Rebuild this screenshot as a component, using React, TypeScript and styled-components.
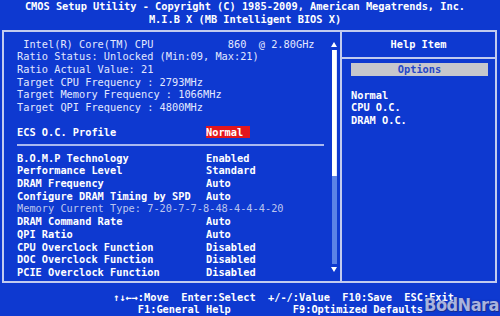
import React from 'react';
import styled, { createGlobalStyle } from 'styled-components';

const GlobalStyle = createGlobalStyle`
  html, body {
    margin: 0;
    padding: 0;
    background: #0f3bd2;
  }
`;

const BLUE = '#0e39d0';
const LINE = '#c2cbef';

const Page = styled.div`
  position: relative;
  width: 500px;
  height: 316px;
  overflow: hidden;
  background: ${BLUE};
  color: #ffffff;
  font-family: "DejaVu Sans Mono", "Liberation Mono", monospace;
  font-size: 10.3px;
  display: flex;
  flex-direction: column;
`;

const Header = styled.header`
  height: 30px;
  padding-right: 10px;
  text-align: center;
  line-height: 12.6px;
  font-weight: bold;
  white-space: pre;
`;

const Frame = styled.div`
  margin: 0 3px 0 2px;
  height: 254px;
  box-sizing: border-box;
  border: 2px solid ${LINE};
  display: grid;
  grid-template-columns: 1fr 155px;
`;

const LeftPanel = styled.section`
  display: flex;
  padding-left: 13px;
  min-width: 0;
`;

const ItemList = styled.div`
  flex: 1;
  padding-top: 5.6px;
`;

const InfoLine = styled.div<{ $dim?: boolean }>`
  height: 12.7px;
  line-height: 12.7px;
  white-space: pre;
  color: ${(p) => (p.$dim ? '#bcc5ee' : '#e2e8ff')};
`;

const Blank = styled.div`
  height: 12.7px;
`;

const SettingRow = styled.div`
  display: grid;
  grid-template-columns: 189px 1fr;
  height: 12.7px;
  line-height: 12.7px;
  font-weight: bold;
  white-space: pre;
`;

const Value = styled.span<{ $selected?: boolean }>`
  display: inline-block;
  line-height: 12px;
  padding-right: ${(p) => (p.$selected ? '7px' : '0')};
  background: ${(p) => (p.$selected ? '#e3161c' : 'transparent')};
`;

const Divider = styled.div`
  height: 0;
  border-top: 2px solid #a9b8f0;
  margin: 5.35px 7px 5.35px 0;
`;

const ScrollBar = styled.div`
  width: 6px;
  margin: 0 3px 0 0;
  padding: 10px 0 9px;
  display: flex;
  flex-direction: column;
  align-items: center;
`;

const Arrow = styled.div<{ $down?: boolean }>`
  width: 0;
  height: 0;
  border-left: 3px solid transparent;
  border-right: 3px solid transparent;
  ${(p) =>
    p.$down
      ? 'border-top: 5px solid #ffffff; margin-top: 3px;'
      : 'border-bottom: 5px solid #ffffff; margin-bottom: 3px;'}
`;

const Track = styled.div`
  flex: 1;
  width: 5px;
  background: #5b82e6;
  display: flex;
  flex-direction: column;
`;

const Thumb = styled.div`
  height: 126px;
  background: #ffffff;
  box-shadow: inset -1px 0 0 #dfe6ff;
`;

const RightPanel = styled.aside`
  border-left: 2px solid ${LINE};
  display: flex;
  flex-direction: column;
`;

const HelpTitle = styled.div`
  height: 25px;
  line-height: 25px;
  border-bottom: 2px solid ${LINE};
  text-align: center;
  font-weight: bold;
`;

const OptionsBar = styled.div`
  margin: 4px 7px 0 9px;
  height: 13px;
  line-height: 13px;
  background: #c6c7cc;
  color: #2546c8;
  text-align: center;
  font-weight: bold;
`;

const OptionList = styled.div`
  margin: 12.6px 0 0 9px;
  font-weight: bold;
  line-height: 12.8px;
`;

const Footer = styled.footer`
  padding: 7.4px 0 0 113px;
  line-height: 12.7px;
  font-weight: bold;
  white-space: pre;
`;

const Watermark = styled.div`
  position: absolute;
  right: 1px;
  bottom: 1px;
  font-family: "DejaVu Sans Condensed", "DejaVu Sans", sans-serif;
  font-weight: bold;
  font-size: 18px;
  letter-spacing: -0.5px;
  color: rgba(196, 204, 236, 0.85);
  text-shadow: 0 0 2px #1a2f90, 1px 1px 0 #1a2f90;
`;

const info = [
  ' Intel(R) Core(TM) CPU            860  @ 2.80GHz',
  'Ratio Status: Unlocked (Min:09, Max:21)',
  'Ratio Actual Value: 21',
  'Target CPU Frequency : 2793MHz',
  'Target Memory Frequency : 1066MHz',
  'Target QPI Frequency : 4800MHz',
];

const settings: Array<[string, string] | string> = [
  ['B.O.M.P Technology', 'Enabled'],
  ['Performance Level', 'Standard'],
  ['DRAM Frequency', 'Auto'],
  ['Configure DRAM Timing by SPD', 'Auto'],
  'Memory Current Type: 7-20-7-7-8-48-4-4-4-20',
  ['DRAM Command Rate', 'Auto'],
  ['QPI Ratio', 'Auto'],
  ['CPU Overclock Function', 'Disabled'],
  ['DOC Overclock Function', 'Disabled'],
  ['PCIE Overclock Function', 'Disabled'],
];

const App = () => {
  return (
    <Page>
      <GlobalStyle />
      <Header>
        <div>CMOS Setup Utility - Copyright (C) 1985-2009, American Megatrends, Inc.</div>
        <div>M.I.B X (MB Intelligent BIOS X)</div>
      </Header>

      <Frame>
        <LeftPanel>
          <ItemList>
            {info.map((line) => (
              <InfoLine key={line}>{line}</InfoLine>
            ))}
            <Blank />
            <SettingRow>
              <span>ECS O.C. Profile</span>
              <span>
                <Value $selected>Normal</Value>
              </span>
            </SettingRow>
            <Divider />
            {settings.map((item) =>
              typeof item === 'string' ? (
                <InfoLine key={item} $dim>
                  {item}
                </InfoLine>
              ) : (
                <SettingRow key={item[0]}>
                  <span>{item[0]}</span>
                  <span>
                    <Value>{item[1]}</Value>
                  </span>
                </SettingRow>
              )
            )}
          </ItemList>
          <ScrollBar>
            <Arrow />
            <Track>
              <Thumb />
            </Track>
            <Arrow $down />
          </ScrollBar>
        </LeftPanel>

        <RightPanel>
          <HelpTitle>Help Item</HelpTitle>
          <OptionsBar>Options</OptionsBar>
          <OptionList>
            <div>Normal</div>
            <div>CPU O.C.</div>
            <div>DRAM O.C.</div>
          </OptionList>
        </RightPanel>
      </Frame>

      <Footer>
        <div>↑↓←→:Move  Enter:Select  +/-/:Value  F10:Save  ESC:Exit</div>
        <div>{'    F1:General Help          F9:Optimized Defaults'}</div>
      </Footer>

      <Watermark>BodNara</Watermark>
    </Page>
  );
};

export default App;
